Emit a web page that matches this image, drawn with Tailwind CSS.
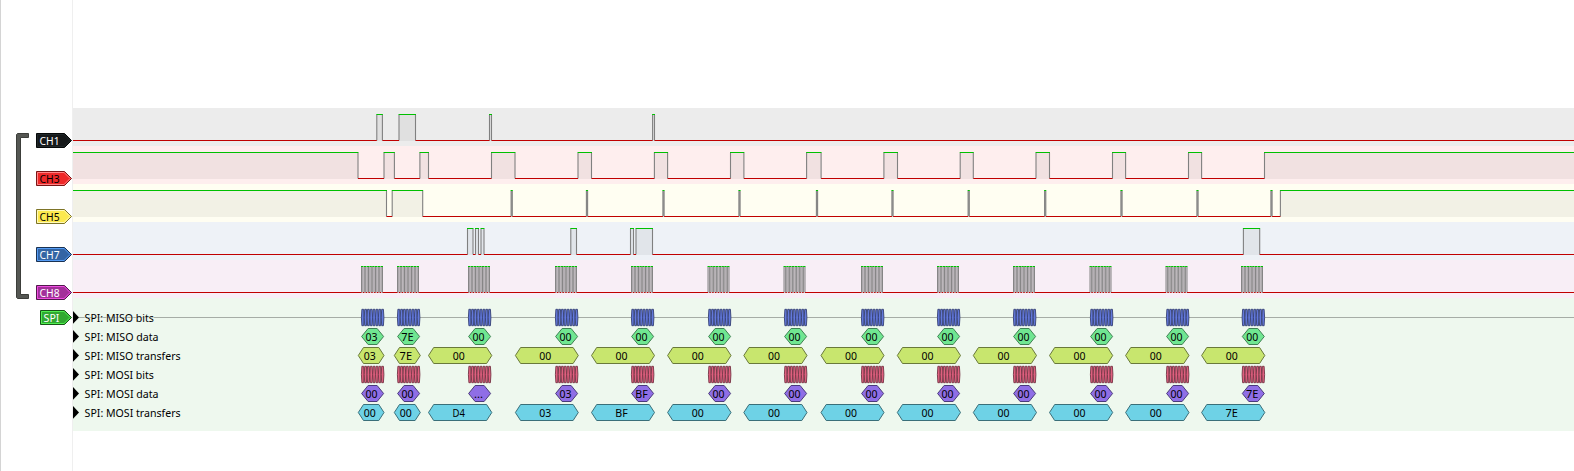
<!DOCTYPE html>
<html lang="en">
<head>
<meta charset="utf-8">
<title>Logic analyzer – SPI</title>
<script src="https://cdn.jsdelivr.net/npm/@tailwindcss/browser@4"></script>
</head>
<body class="h-[471px] w-[1574px] overflow-hidden bg-white">
<div class="flex h-[471px]">
  <aside class="flex w-[73px] shrink-0 justify-between border-x border-l-[#d4d4d4] border-r-[#efefef] pt-[133px]">
    <svg class="ml-[15px] shrink-0" width="14" height="166" viewBox="0 0 14 166">
      <path d="M.5 1.5L1.5 .5H12.500V4.500H4.500V161.500H12.500V165.500H1.500L.5 164.500Z" fill="#555753" stroke="#3c3e3a"/>
    </svg>
    <div id="tags" class="flex flex-col items-end gap-[23px]"></div>
  </aside>
  <main class="flex grow flex-col pt-[108px]">
    <div id="rows" class="flex flex-col"></div>
    <div id="decode" class="h-[133px] bg-[#eef8ee]"></div>
  </main>
</div>
<script>
const FONT = '"Noto Sans", "DejaVu Sans", sans-serif';
const text = (s, x, y, w, fill, extra = '') =>
  `<text x="${x}" y="${y}" font-size="11.2" font-family='${FONT}' fill="${fill}" textLength="${w}" lengthAdjust="spacingAndGlyphs" ${extra}>${s}</text>`;

// Channel flags
const tags = [
  ['CH1', 36, '#16191a', '#060808', '#202729', '#fff'],
  ['CH3', 36, '#ef2929', '#7a1515', '#ff8585', '#000'],
  ['CH5', 36, '#fce94f', '#7d7428', '#fff9b8', '#000'],
  ['CH7', 36, '#3465a4', '#1a3252', '#559cf5', '#fff'],
  ['CH8', 36, '#a3309a', '#511a4c', '#f04de2', '#fff'],
  ['SPI', 32, '#31a831', '#185418', '#50f050', '#fff'],
];
document.getElementById('tags').innerHTML = tags.map(([n, w, f, b, h, t], i) =>
  `<svg class="${i === 5 ? '-mt-[13px]' : ''} block" width="${w}" height="15" viewBox="0 0 ${w} 15">
    <path d="M.5 .5H${w - 7.5}L${w - .5} 7.500L${w - 7.5} 14.500H.5Z" fill="${f}" stroke="${b}"/>
    <path d="M1.500 1.500H${w - 7.9}L${w - 1.9} 7.500L${w - 7.9} 13.500H1.500Z" fill="none" stroke="${h}"/>
    ${text(n, 3.6, 12, n === 'SPI' ? 15.8 : 20, t)}</svg>`).join('');

// Logic traces: [start, end] intervals where the level is high
const bursts = [361, 397, 468, 555, 631, 707.5, 783.5, 861, 937, 1013, 1089.5, 1165.5, 1241];
const spikes = [511.7, 587, 663.5, 739.5, 817, 892.5, 968.7, 1045.2, 1121.5, 1197.5, 1271.5];
const traces = [
  ['#ececec', [[376.8, 382.4], [399, 415.5], [489.5, 491.5], [652.6, 654.5]]],
  ['#feeeee', [[60, 358], [384, 394.4], [419.9, 428.5], [491.5, 515], [578, 591.5], [654.4, 667.6], [730.5, 743.9], [806.6, 821.1], [883.9, 897.5], [960.2, 973.3], [1036, 1049.5], [1112.5, 1125.6], [1188.5, 1201.6], [1264.5, 1600]]],
  ['#fffef2', [[60, 386.5], [392.2, 422.7], ...spikes.map(x => [x - .6, x + .6]), [1280.4, 1600]]],
  ['#eef2f7', [[467.5, 473], [475.5, 478.5], [481, 484], [570.8, 576.5], [630.5, 633.5], [636, 652.5], [1243.4, 1259.7]]],
  ['#f8eef6', bursts.flatMap(b => Array.from({length: 8}, (_, i) => [b + .5 + i * 2.8, b + 1.900 + i * 2.8]))],
];
document.getElementById('rows').innerHTML = traces.map(([bg, hi], r) => {
  let s = `<rect x="73" width="1501" height="38" fill="${bg}"/>`, low = 60;
  let edges = '', top = '', base = '';
  for (const [a, b] of hi) {
    s += `<rect x="${a}" y="6" width="${b - a}" height="27" fill="#000" opacity=".05"/>`;
    edges += `M${a} 7V32.500M${b} 7V32.500`;
    top += `M${a - .5} 6.500H${b + .5}`;
    base += `M${low} 32.500H${a}`;
    low = b;
  }
  base += `M${low} 32.500H1600`;
  return `<svg class="block" width="1501" height="38" viewBox="73 0 1501 38">${s}
    <path d="${edges}" stroke="#808080" stroke-width="${r === 4 ? .95 : 1.1}"/>
    <path d="${top}" stroke="#00c000"/><path d="${base}" stroke="#c00000"/></svg>`;
}).join('');

// Decoder annotations
const bits = [361, 397, 468, 555, 631, 708, 784, 861, 937, 1013, 1090, 1166, 1241.7];
const transfers = [[358.3, 384], [394.3, 420.3], [428.5, 491.8], [515.4, 578.3], [591.5, 654.5], [667.6, 731], [743.8, 807], [821, 884], [897.3, 960.5], [973.3, 1036.5], [1049.5, 1112.7], [1125.6, 1189], [1201.6, 1264.8]];
const hex = (a, b, y, t, f, st) =>
  `<path d="M${a} ${y + 8.5}L${a + t} ${y + .5}H${b - t}L${b} ${y + 8.5}L${b - t} ${y + 16.5}H${a + t}Z" fill="${f}" stroke="${st}"/>`;
const label = (s, cx, y) => s === '...' ? text(s, cx - 4.5, y, 9, '#000') : text(s, cx - (s === '00' || s === '03' ? 6 : 6.2), y, s === '00' || s === '03' ? 12 : 12.4, '#000');
const miso = ['03', '7E', ...Array(11).fill('00')];
const mosi = ['00', '00', 'D4', '03', 'BF', ...Array(7).fill('00'), '7E'];
const rows = [
  ['SPI: MISO bits', 69.3, 'bits', '#6379dc', '#343f74'],
  ['SPI: MISO data', 74, miso, '#70e691', '#3f8052'],
  ['SPI: MISO transfers', 96, miso, '#c8e66e', '#69793a'],
  ['SPI: MOSI bits', 69.3, 'bits', '#e0607f', '#753344'],
  ['SPI: MOSI data', 74, mosi, '#8f6ee6', '#4a3a79'],
  ['SPI: MOSI transfers', 96, mosi, '#6ed2e6', '#3a6f79'],
];
let d = '<path d="M79 19.500H1574" stroke="#a6ada6"/>';
rows.forEach(([name, w, vals, f, st], r) => {
  const y = 11 + r * 19;
  d += `<path d="M73 ${y + 2}L79 ${y + 8.4}L73 ${y + 14.8}Z" fill="#000"/>`;
  d += text(name, 84.6, y + 13, w, '#000', 'stroke="#eef8ee" stroke-opacity=".6" stroke-width="2" paint-order="stroke"');
  bits.forEach((b, i) => {
    if (vals === 'bits') {
      for (let k = 0; k < 8; k++) {
        const x = b + .4 + k * 2.83;
        d += `<path d="M${x} ${y + 8.5}L${x + .5} ${y + .3}H${x + 2.200}L${x + 2.700} ${y + 8.500}L${x + 2.200} ${y + 16.700}H${x + .5}Z" fill="${f}" stroke="${st}" stroke-width=".9"/>`;
      }
    } else if (r % 3 === 1) {
      const v = r === 4 && i === 2 ? '...' : vals[i];
      d += hex(b + .6, b + 22.600, y, 6.5, f, st) + label(v, b + 10.5, y + 13);
    } else {
      const [a, e] = transfers[i];
      d += hex(a, e, y, 5.200, f, st) + label(vals[i], (a + e) / 2 - 1.500, y + 13);
    }
  });
});
document.getElementById('decode').innerHTML = `<svg class="block" width="1501" height="133" viewBox="73 0 1501 133">${d}</svg>`;
</script>
</body>
</html>
